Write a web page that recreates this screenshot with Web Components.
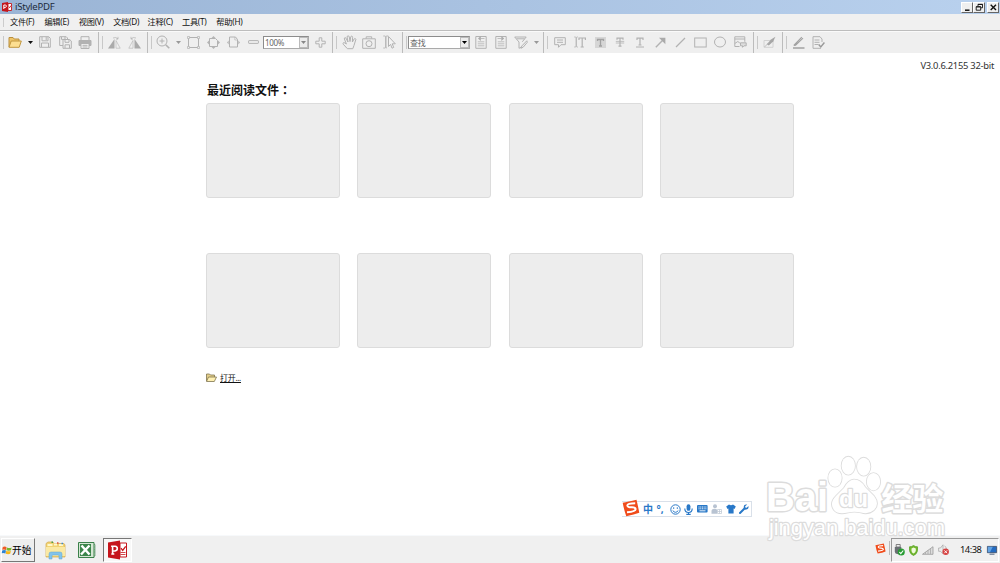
<!DOCTYPE html>
<html lang="zh-CN">
<head>
<meta charset="utf-8">
<title>iStylePDF</title>
<style>
html, body { margin: 0; height: 100%; overflow: hidden; }
body { font-family: "Noto Sans", "Noto Sans CJK SC", sans-serif; background: #fff; color: #222; }
</style>
</head>
<body>
<pdf-app></pdf-app>

<script>
// --- Icons: [width, height, svg content] ---
const ICONS = {
    app: [10, 10, '<path d="M0 1L6 0v10L0 9z" fill="#c4161c"/><path d="M6 1.5h3.5v7H6z" fill="#fff" stroke="#c4161c" stroke-width=".9"/><path d="M1.8 7V3h1.5q1.2.1 1.1 1.2T3.2 5.4H2M6.8 5.8l.8.9 1.3-2" stroke="#fff" fill="none"/><path d="M6.8 4.8l.8.9 1.2-2" stroke="#c4161c" fill="none"/>'],
    open: [14, 12, '<path d="M1 11V1.500h4L6.300 3H11v3" fill="#efc568" stroke="#b98f3e"/><path d="M1 11.300L3.200 5H13.300L11.200 11.300z" fill="#fddf91" stroke="#c0963f"/>'],
    openSmall: [11, 9, '<path d="M.5 8V1h3l1 1h4v2" fill="#e5cf8a" stroke="#7e744f" stroke-width=".8"/><path d="M.5 8.5L2.5 4h8L8.3 8.5z" fill="#fff0b2" stroke="#7e744f" stroke-width=".8"/>'],
    save: [12, 12, '<path d="M.7.7h9L11.3 2.3v9H.7z"/><path d="M3 .8v4h6v-4M7.2 1v3M2.5 11V7h7v4"/>'],
    saveAll: [13, 13, '<path d="M4 9.5H.7V.7h6.500L8.500 2v1.300"/><path d="M2.5.9v2.500h3.500v-2.500"/><path d="M4 3.500h6.500L12.300 5v7.300H4z"/><path d="M6 3.700v2.600h4v-2.600M6 12V8.800h4.500V12"/>'],
    print: [14, 13, '<path d="M3 4V.7h8V4"/><path d="M1 4.5h12v5H1z" fill="#b2b2b2"/><path d="M3 7.5h8v5H3z" fill="#f4f4f4"/><path d="M4.5 9.3h5M4.5 11h5"/>'],
    mirrorL: [13, 13, '<path d="M0 12.5L6.500 3v9.500z" fill="#aaa" stroke="none"/><path d="M8 4.500l4.200 7.700H8z" stroke-width=".6"/><path d="M5 2q3-1.4 5 .8M10 .8v2.300H8" stroke-width=".7"/>'],
    mirrorR: [13, 13, '<path d="M13 12.5L6.500 3v9.500z" fill="#aaa" stroke="none"/><path d="M5 4.500L.8 12.200H5z" stroke-width=".6"/><path d="M8 2Q5 .6 3 2.800M3 .8v2.300h2" stroke-width=".7"/>'],
    zoom: [14, 14, '<circle cx="6" cy="6" r="5"/><path d="M3.5 6h5M6 3.5v5"/><path d="M9.7 9.7L13.3 13.3" stroke-width="1.600"/>'],
    actual: [13, 13, '<path d="M2.500 1.500h8M2.500 11.500h8M1.500 2.500v8M11.500 2.500v8"/><path d="M.5.5h2v2h-2zM10.500.5h2v2h-2zM.5 10.500h2v2h-2zM10.500 10.500h2v2h-2z" stroke-width=".7"/>'],
    fitPage: [13, 13, '<path d="M2.500 2.500h6L10.500 4.500v6H2.500z"/><g fill="#b5b5b5" stroke="none"><path d="M6.500 0l2 2h-4zM6.500 13l2-2h-4zM0 6.500l2-2v4zM13 6.500l-2-2v4z"/></g>'],
    fitWidth: [13, 12, '<path d="M2.500 1h6L10.500 3.500V11h-8z"/><path d="M7.800 1v3h2.700" stroke-width=".6"/><g fill="#b5b5b5" stroke="none"><path d="M0 6.500l1.700-2v4zM13 6.500l-1.700-2v4z"/></g>'],
    minus: [11, 4, '<rect x=".6" y=".6" width="9.800" height="2.800" rx=".5"/>'],
    plus: [11, 11, '<path d="M4.200.8h2.600v3.400h3.400v2.600H6.800v3.400H4.200V6.800H.8V4.200h3.400z"/>'],
    hand: [15, 15, '<path d="M5.4 13.7L1.2 9.2Q.5 8 1.6 7.7T4.4 9L2.4 4Q2.1 2.7 3 2.6T4.3 3.8L6 7 5.1 2Q5.2.8 6.1.8T7.3 2L8 6.6 8.7 2Q9 1 9.800 1.100T10.600 2.500L10.400 7l1.700-3Q12.800 3.100 13.500 3.700T13.700 5L12 10.400 10.800 13.700z"/>'],
    camera: [14, 13, '<path d="M.7 2.8h12.6v9.500H.7zM4.2 2.600V.8h5.500v1.800"/><circle cx="7" cy="7.700" r="3"/>'],
    select: [13, 14, '<path d="M.3 1h1.500Q2.800 1.200 2.800 2v10q0 .9-1 1H.3M5.300 1h-1.500Q2.800 1.200 2.800 2v10q0 .9 1 1" stroke-width=".9"/><path d="M5.500 1.500v10L7.600 9.300 9 13.200 10.700 12.400 9.200 8.800H12.300z" fill="#f3f3f3"/>'],
    findPrev: [12, 14, '<path d="M.8 1.500h10.400v11.800H.8z"/><path d="M5.500 3.500h4M2.800 6.800h6.500M2.800 8.800h6.500M2.800 10.800h6.500" stroke-width=".8"/><path d="M5.800 1L3 3.500 5.800 6z" fill="#aaa" stroke="none"/>'],
    findNext: [12, 14, '<path d="M.8 1.500h10.400v11.800H.8z"/><path d="M2.500 3.500h4M2.800 6.800h6.500M2.800 8.800h6.500M2.800 10.800h6.500" stroke-width=".8"/><path d="M6.300 1L9.200 3.500 6.300 6z" fill="#aaa" stroke="none"/>'],
    filter: [14, 13, '<path d="M.7 1h11.500L8.300 5.800M.7 1L5 6v6.300l2.500-1.400"/><path d="M2.5 2.800h8M12.800 4.800L7.900 9.900 6.900 12.300 9.200 11.200 13.300 6.300z"/>'],
    note: [12, 11, '<path d="M.7.7h10.600v7H7L4.500 10.300V7.700H.7z"/><path d="M3 3h6M3 5.300h6"/>'],
    insertText: [12, 12, '<path d="M.2 1h1q1 .1 1 1v8q0 1-1 1h-1M4 1h-.7q-1 .1-1 1v8q0 1 1 1H4" stroke-width=".8"/><path d="M5 4V2h6.400v2M8.200 2v9M6.600 11h3.200" stroke-width="1.200"/>'],
    highlight: [11, 11, '<path d="M0 0h11v11H0z" fill="#d6d6d6" stroke="none"/><path d="M2.500 4V2.500h6V4M5.500 2.500V9M4 9h3" stroke="#a2a2a2" stroke-width="1.300"/>'],
    strike: [10, 10, '<path d="M2 2.800V1.200h6v1.600M5 1.200V9M3.500 9.200h3" stroke-width="1.200"/><path d="M.8 4.400h8.400M.8 6h8.400" stroke-width=".8"/>'],
    underline: [10, 11, '<path d="M2 3V1.200h6V3M5 1.200V7.800M3.500 8h3" stroke-width="1.200"/><path d="M1 10h8"/>'],
    arrow: [11, 11, '<path d="M.8 10.200L8 3" stroke-width="1.400"/><path d="M4 .8h6.400v6.400z" fill="#aaa" stroke="none"/>'],
    line: [11, 11, '<path d="M1 10L10 1" stroke-width="1.200"/>'],
    rect: [13, 11, '<rect x=".7" y="1" width="11.500" height="9"/>'],
    ellipse: [12, 12, '<ellipse cx="6" cy="6" rx="5.500" ry="5"/>'],
    stamp: [13, 12, '<path d="M5.500 10.500H.8V.8h10v5M.8 3h10M.8 7.500l3-2 2 1.500"/><path d="M6.500 6.800h5.700v3H10l-1.500 1.500V9.800h-2z" fill="#ddd"/>'],
    sign: [13, 13, '<path d="M1 4.500h9v6.800H1z" stroke="#d2d2d2"/><path d="M3.800 8.300L8 3.500 12.400.8 10.400 5.200 5.800 9.500z" fill="#a6a6a6" stroke="none"/><path d="M1.500 11l4-4" stroke-width=".8"/>'],
    edit: [13, 13, '<path d="M1.800 9.500L9.800 1.200M1.800 9.500l1.800-.3L11 2.200" stroke="#a2a2a2" stroke-width="1.100"/><path d="M1 12h11.500" stroke="#a2a2a2" stroke-width="1.500"/>'],
    form: [13, 13, '<path d="M9 12.300H1V.7h7L10 3v3"/><path d="M2.500 4h5M2.500 6.300h5M2.500 8.500h4"/><path d="M6.700 8.500L8.800 11l3.600-4.500" stroke="#999" stroke-width="1.400"/>'],
    flag: [10, 9, '<path d="M.8 1Q3 0 4.6 1.2L4 4Q2.2 3 .2 3.8z" fill="#ef5b25"/><path d="M5 1.4q2 1 4.6 0L9 4.3Q7 5.2 4.4 4.3z" fill="#79b82c"/><path d="M.2 4.4q2-1 3.8 0L3.4 7.5Q2 6.6-.3 7.2z" fill="#2c83d2"/><path d="M4.3 4.8q2.5 1 4.6 0L8.2 7.8Q6 8.6 3.7 7.7z" fill="#f7b719"/>'],
    explorer: [21, 20, '<path d="M1 17V3.5L3 2h5l1 1.5h10L20 5v12z" fill="#f1d374" stroke="#d3a94c" stroke-width=".7"/><path d="M2.5 5h5M9 4.5h3M14 5h4" stroke="#fff8ca" stroke-width="2"/><path d="M6.500 2.200h1.500" stroke="#48a04b" stroke-width="1.500"/><path d="M12 3h1.500" stroke="#e0503a" stroke-width="1.500"/><path d="M16.500 3.500h1.500" stroke="#3b86cc" stroke-width="1.500"/><path d="M1 7h19v9H1z" fill="#fae9a4"/><path d="M4 19v-5q0-2 2-2h9q2 0 2 2v5h-3v-3q0-1-1-1H8q-1 0-1 1v3z" fill="#83c3ea" stroke="#5fa5d2" stroke-width=".5"/>'],
    excel: [19, 18, '<path d="M11 3.500h7V15h-7z" fill="#eef6ee" stroke="#6da17a" stroke-width=".8"/><path d="M13 6h5M13 8.500h5M13 11h5M15.500 4v11" stroke="#8ab795" stroke-width=".8"/><path d="M1.500 1.500h15.500v15H1.500z" fill="#d5e6d4" stroke="#3a8049"/><path d="M3 3h11v12H3z" fill="#3b854a"/><path d="M4.500 4.500l8 9M12.500 4.500l-8.500 9" stroke="#fff" stroke-width="2.400"/>'],
    pdf: [20, 20, '<path d="M0 2.5L12 .5v19L0 17.5z" fill="#c6151c"/><path d="M12 3h6.500v14H12z" fill="#fff" stroke="#c6151c"/><path d="M4.6 14V6M3.1 6.300h4q2.200.2 2.200 2.200T7 11H5M3.300 14h3" stroke="#fff" stroke-width="1.600" fill="none"/><path d="M13 8.200l1.700 2.200 3-4" stroke="#c6151c" stroke-width="1.300" fill="none"/><path d="M12.500 12.500h5M12.500 14.500h5" stroke="#c6151c" stroke-width=".8"/>'],
    sogou: [18, 18, '<path d="M.7 3.700Q6 3 14.500.8q1 4 2.800 13-5 2-13 3.400Q2 11 .7 3.700z" fill="#f04c1b"/><path d="M13.200 4.300Q5 4.300 5.400 6.700 6 8.500 10 8.300q3.500 0 3.600 1.800.2 2.300-8.600 3.200" stroke="#fff" stroke-width="2" fill="none"/>'],
    smile: [11, 11, '<circle cx="5.5" cy="5.5" r="4.7" stroke="#2878c8" fill="none"/><path d="M3.7 3.3v1.6M7.3 3.3v1.6M2.7 6.5q2.8 3.6 5.6 0" stroke="#2878c8" fill="none"/>'],
    mic: [9, 11, '<rect x="2.6" y=".3" width="3.8" height="6.5" rx="1.9" fill="#2878c8"/><path d="M.8 4.5q0 4 3.7 4t3.7-4M4.5 8v2.3M2.3 10.400h4.400" stroke="#2878c8" stroke-width="1.100" fill="none"/>'],
    keyboard: [11, 8, '<rect width="10.600" height="7.600" rx="1" fill="#2878c8"/><path d="M1.5 2h8M1.5 3.800h8" stroke="#fff" stroke-width=".9" stroke-dasharray="1.1 .6"/><path d="M2.5 5.800h6" stroke="#fff" stroke-width=".9"/>'],
    user: [11, 10, '<circle cx="4" cy="2.2" r="2" fill="#b8c3d2"/><path d="M.5 9.8V7q0-2.3 3.5-2.3L6 5.4v4.400z" fill="#b8c3d2"/><path d="M6.5 5.5h4v4h-4zM8.500 5.500v4M6.500 7.500h4" fill="#fff" stroke="#bcc5d2" stroke-width=".7"/>'],
    shirt: [10, 10, '<path d="M3 .5q2 1.300 4 0L9.800 2.500 8.500 5 7.600 4.600v5H2.400v-5L1.500 5 .2 2.500z" fill="#2878c8"/>'],
    wrench: [10, 10, '<path d="M1 9L5.5 4.5" stroke="#2878c8" stroke-width="2" stroke-linecap="round"/><path d="M8.200.6Q5-.2 4.700 2.800 4.700 6 7.300 5.600 9.900 5.200 9.500 2L7.700 3.800 6.200 3.500 6.200 2.300z" fill="#2878c8"/>'],
    usb: [11, 12, '<path d="M2.2.5h4V3h-4z" fill="#eee" stroke="#666" stroke-width=".8"/><path d="M.8 3h6.500v5q0 2-2 2.300L3 10Q.8 9.500.8 7.500z" fill="#696f73"/><circle cx="7.300" cy="8" r="3.500" fill="#279c34"/><path d="M5.400 8l1.400 1.600L9.300 6.500" stroke="#fff" stroke-width="1.100" fill="none"/>'],
    shield: [9, 11, '<path d="M4.5.5Q6.5 2 8.5 1.8V5.5Q8 9 4.5 10.500 1 9 .5 5.500V1.800Q2.500 2 4.500.5z" fill="#73b72d" stroke="#58a32a" stroke-width=".8"/><path d="M4.500 2.400l2.300 1V6Q6.200 7.700 4.500 8.500 2.800 7.700 2.500 6V3.400z" fill="#effadd"/>'],
    signal: [12, 9, '<path d="M.5 8.300L11 .7v7.600z" fill="#ddd" stroke="#999" stroke-width=".8"/><path d="M3.500 6v2M6 4v4M8.500 2.400V8" stroke="#aaa" stroke-width=".8"/>'],
    muted: [12, 12, '<path d="M.6 4H2.500L5 .8v9L2.500 7.300H.6z" fill="#eee" stroke="#aaa" stroke-width=".8"/><path d="M6.500 2q2 1 2 3" stroke="#aaa" stroke-width=".8" fill="none"/><circle cx="7.700" cy="7.800" r="3.200" fill="#d64242"/><path d="M6.300 6.400l2.800 2.800M9.100 6.400L6.300 9.200" stroke="#fff"/>'],
    display: [10, 9, '<path d="M.4.4h9.200v6.300H.4z" fill="#246bc0" stroke="#333f55" stroke-width=".7"/><path d="M.8.8h5L3 6.200H.8z" fill="#63a3e3"/><path d="M2.5 8.200h5" stroke="#536682"/>'],
    min: [9, 9, '<path d="M2 7.200h4.500" stroke="#111" stroke-width="1.500"/>'],
    restore: [9, 9, '<path d="M3 3V1.300h4.500v3.500H6M3 1.500h4.500M1.200 3.700h4.500v3.500H1.200zM1.200 3.900h4.500" stroke="#111" stroke-width=".9" fill="none"/>'],
    close: [9, 9, '<path d="M1.700 1.800L7 7M7 1.800L1.700 7" stroke="#111" stroke-width="1.400"/>'],
};

class UiIcon extends HTMLElement {
    connectedCallback() {
        const [w, h, body] = ICONS[this.getAttribute('name')];
        const size = this.getAttribute('size') || w;
        this.attachShadow({mode: 'open'}).innerHTML = `
<style>:host{display:inline-flex;flex:none;align-items:center;justify-content:center}svg{display:block;overflow:visible}</style>
<svg width="${size}" height="${h * size / w}" viewBox="0 0 ${w} ${h}">${body}</svg>`;
    }
}
customElements.define('ui-icon', UiIcon);

// --- Toolbar button; "drop" draws only the small drop-down triangle ---
class ToolButton extends HTMLElement {
    connectedCallback() {
        const name = this.getAttribute('name');
        const [w, h, body] = ICONS[name] || [5, 3, '<path d="M0 0h5L2.5 3z" fill="currentColor" stroke="none"/>'];
        this.attachShadow({mode: 'open'}).innerHTML = `
<style>
:host{display:flex;flex:none;width:20px;align-items:center;justify-content:center;color:#999}
:host([name=drop]){width:10px}
:host([active]){color:#111}
svg{display:block;fill:none;stroke:#b2b2b2;stroke-width:1}
</style>
<svg width="${w}" height="${h}" viewBox="0 0 ${w} ${h}">${body}</svg>`;
    }
}
customElements.define('tool-button', ToolButton);

class ToolGroup extends HTMLElement {
    constructor() {
        super();
        this.attachShadow({mode: 'open'}).innerHTML = `
<style>
:host{display:flex;flex:none;box-sizing:border-box;align-items:center;padding-bottom:1px;border-right:1px solid #bcbcbc}
:host(:last-of-type){border:0}
i{flex:none;width:1px;height:13px;margin:0 1px 0 3px;background:#c8c8c8}
</style><i></i><slot></slot>`;
    }
}
customElements.define('tool-group', ToolGroup);

class ComboBox extends HTMLElement {
    constructor() {
        super();
        this.attachShadow({mode: 'open'}).innerHTML = `
<style>
:host{display:flex;flex:none;box-sizing:border-box;height:13px;border:1px solid;border-color:#8c8c8c #aaa #aaa #8c8c8c;background:#fff;font-size:8px;line-height:11px;color:#666}
span{flex:1;padding-left:1px;letter-spacing:-.3px;white-space:nowrap}
b{display:flex;width:9px;align-items:center;justify-content:center;background:#ececec;border:1px solid #bbb;box-sizing:border-box;color:#888}
:host([active]) b{color:#000}
</style>
<span><slot></slot></span><b><svg width="5" height="3"><path d="M0 0h5L2.5 3z" fill="currentColor"/></svg></b>`;
    }
}
customElements.define('combo-box', ComboBox);

class TitleBar extends HTMLElement {
    constructor() {
        super();
        this.attachShadow({mode: 'open'}).innerHTML = `
<style>
:host{display:flex;height:14px;box-sizing:border-box;padding:0 1px 0 2px;align-items:center;background:linear-gradient(90deg,#9ab4d5,#b9d1ee);color:#1d2b3c}
h1{flex:1;margin:0 0 0 3px;font-size:9.6px;letter-spacing:-.25px;font-weight:400;line-height:14px;white-space:nowrap}
button{display:flex;width:12px;height:11px;padding:0;align-items:center;justify-content:center;border:1px solid;border-color:#fff #666 #666 #fff;background:#efefef}
button:last-child{margin-left:2px}
</style>
<ui-icon name="app"></ui-icon><h1><slot></slot></h1>
<button><ui-icon name="min"></ui-icon></button><button><ui-icon name="restore"></ui-icon></button><button><ui-icon name="close"></ui-icon></button>`;
    }
}
customElements.define('title-bar', TitleBar);

class MenuBar extends HTMLElement {
    constructor() {
        super();
        const items = ['文件(F)', '编辑(E)', '视图(V)', '文档(D)', '注释(C)', '工具(T)', '帮助(H)'];
        this.attachShadow({mode: 'open'}).innerHTML = `
<style>
:host{display:flex;height:17px;box-sizing:border-box;align-items:center;background:#f0f0f0;border-bottom:1px solid #bdbdbd;font-size:8.2px;letter-spacing:-.25px;color:#111}
i{width:1px;height:9px;margin:0 6px 0 3px;background:#ccc}
span{width:34.4px;line-height:16px;white-space:nowrap}
</style><i></i>${items.map(t => `<span>${t}</span>`).join('')}`;
    }
}
customElements.define('menu-bar', MenuBar);

class ToolBar extends HTMLElement {
    constructor() {
        super();
        const tools = names => names.split(' ').map(n => `<tool-button name="${n}"></tool-button>`).join('');
        this.attachShadow({mode: 'open'}).innerHTML = `
<style>
:host{display:flex;height:22px;background:#efefef;border-top:1px solid #fafafa;box-sizing:border-box}
.zoom{width:46px;margin-right:1px}
.find{width:62px;margin-right:1px}
.wide{margin-left:1px}
</style>
<tool-group style="width:99px"><tool-button name="open"></tool-button><tool-button name="drop" active></tool-button>${tools('save saveAll print')}</tool-group>
<tool-group style="width:49px">${tools('mirrorL mirrorR')}</tool-group>
<tool-group style="width:185px">${tools('zoom drop actual fitPage fitWidth minus')}<combo-box class="zoom">100%</combo-box>${tools('plus')}</tool-group>
<tool-group style="width:70px"><tool-button class="wide" name="hand"></tool-button>${tools('camera select')}</tool-group>
<tool-group style="width:141px"><combo-box class="find" active>查找</combo-box>${tools('findPrev findNext filter drop')}</tool-group>
<tool-group style="width:210px"><tool-button class="wide" name="note"></tool-button>${tools('insertText highlight strike underline arrow line rect ellipse stamp')}</tool-group>
<tool-group style="width:29px">${tools('sign')}</tool-group>
<tool-group>${tools('edit form')}</tool-group>`;
    }
}
customElements.define('tool-bar', ToolBar);

class StartPage extends HTMLElement {
    constructor() {
        super();
        this.attachShadow({mode: 'open'}).innerHTML = `
<style>
:host{display:block;flex:1;background:#fff}
.version{padding:6px 6px 0 0;text-align:right;font-size:9.4px;letter-spacing:-.27px;line-height:14px;color:#333}
main{width:588px;margin-left:206px}
h2{margin:9px 0 4px;padding-left:1px;font-size:12px;line-height:16px;font-weight:600;color:#111}
h2 span{font-family:"Noto Sans CJK TC",sans-serif}
.files{display:grid;grid-template-columns:repeat(4,134px);grid-auto-rows:95px;gap:55px 17.3px}
.files div{box-sizing:border-box;border:1px solid #dcdcdc;border-radius:3px;background:#ededed}
.open{display:flex;align-items:center;margin-top:23px;gap:3px;font-size:8px;line-height:13px;color:#111}
u{letter-spacing:-.3px;text-underline-offset:1px}
</style>
<div class="version">V3.0.6.2155 32-bit</div>
<main>
    <h2>最近阅读文件<span lang="zh-TW">：</span></h2>
    <div class="files">${'<div></div>'.repeat(8)}</div>
    <div class="open"><ui-icon name="openSmall"></ui-icon><u>打开...</u></div>
</main>`;
    }
}
customElements.define('start-page', StartPage);

class ImeBar extends HTMLElement {
    constructor() {
        super();
        this.attachShadow({mode: 'open'}).innerHTML = `
<style>
:host{position:absolute;left:622px;top:501px;display:flex;width:130px;height:16px;box-sizing:border-box;align-items:center;background:#fff;border:1px solid #d9e0e9;border-left:0;color:#2878c8;font-size:10px;font-weight:700;line-height:14px}
div{flex:1;display:flex;align-items:center;justify-content:space-between;padding:0 2px 0 3px}
ui-icon:first-of-type{margin-top:-2px}
span{width:10px;white-space:nowrap}
</style>
<ui-icon name="sogou"></ui-icon>
<div><span>中</span><span>°,</span>${['smile', 'mic', 'keyboard', 'user', 'shirt', 'wrench'].map(n => `<ui-icon style="margin:0" name="${n}"></ui-icon>`).join('')}</div>`;
    }
}
customElements.define('ime-bar', ImeBar);

class TaskBar extends HTMLElement {
    constructor() {
        super();
        this.attachShadow({mode: 'open'}).innerHTML = `
<style>
:host{display:flex;height:28px;box-sizing:border-box;padding:2px 1px 1px;background:#f0f0f0;border-top:1px solid #f7f9fb;color:#111}
.start{display:flex;width:34px;box-sizing:border-box;align-items:center;gap:0;padding:0;border:1px solid;border-color:#fff #777 #777 #fff;background:#eee;font:9.7px "Noto Sans","Noto Sans CJK SC",sans-serif;white-space:nowrap}
.task{display:flex;width:29px;margin-left:2px;box-sizing:border-box;align-items:center;justify-content:center}
.first{margin-left:6px}
.task.on{border:1px solid;border-color:#777 #fff #fff #777;background:#f8f8f8}
.sogou{margin:0 3px 3px auto}
.tray{display:flex;width:108px;box-sizing:border-box;align-items:center;border:1px solid;border-color:#999 #fff #fff #999;padding-left:2px}
.tray ui-icon{margin-right:4px}
.bar{width:1px;height:14px;margin:3px 1px 0 0;background:#bbb}
time{width:22px;margin:0 5px 0 6px;font-size:9.4px;letter-spacing:-.5px;line-height:22px;white-space:nowrap}
.tray ui-icon:last-child{margin:0}
</style>
<button class="start"><ui-icon name="flag"></ui-icon>开始</button>
<div class="task first"><ui-icon name="explorer"></ui-icon></div>
<div class="task"><ui-icon name="excel"></ui-icon></div>
<div class="task on"><ui-icon name="pdf"></ui-icon></div>
<ui-icon class="sogou" name="sogou" size="11"></ui-icon><div class="bar"></div>
<div class="tray"><ui-icon name="usb"></ui-icon><ui-icon name="shield"></ui-icon><ui-icon name="signal"></ui-icon><ui-icon name="muted"></ui-icon><time>14:38</time><ui-icon name="display"></ui-icon></div>`;
    }
}
customElements.define('task-bar', TaskBar);

// --- Outlined logo lying over the page and the taskbar ---
class WaterMark extends HTMLElement {
    constructor() {
        super();
        this.attachShadow({mode: 'open'}).innerHTML = `
<style>
:host{position:absolute;left:760px;top:450px;pointer-events:none}
svg{display:block;fill:#fff;stroke:#dcdcdc;stroke-width:3;stroke-linejoin:round;paint-order:stroke;font-family:"Liberation Sans","Noto Sans CJK SC",sans-serif}
ellipse,path{stroke-width:1.7}
</style>
<svg width="200" height="96">
<text x="6" y="61" font-size="40" font-weight="700" textLength="62" lengthAdjust="spacingAndGlyphs">Bai</text>
<ellipse cx="75" cy="28" rx="6.700" ry="8.700"/><ellipse cx="88.300" cy="15.700" rx="6.700" ry="9"/><ellipse cx="103.700" cy="16.700" rx="6.700" ry="9"/><ellipse cx="113.500" cy="31.700" rx="6.700" ry="8.700"/>
<path d="M94 29.500Q101 29.500 105 37L114 46Q120 54 114 60 108 65 101 62.500 94 61 88 62.500 78 65 74 60 69 53 76 46L84 38Q88 30 94 29.500z"/>
<text x="79" y="57" font-size="23" font-weight="700" textLength="29" lengthAdjust="spacingAndGlyphs" stroke-width="2.400">du</text>
<text x="121.500" y="60" font-size="31" font-weight="700" textLength="62">经验</text>
<text x="9" y="85" font-size="22" textLength="176" stroke-width="2.400">jingyan.baidu.com</text>
</svg>`;
    }
}
customElements.define('water-mark', WaterMark);

class PdfApp extends HTMLElement {
    constructor() {
        super();
        this.attachShadow({mode: 'open'}).innerHTML = `
<style>:host{position:relative;display:flex;flex-direction:column;width:1000px;height:563px;overflow:hidden}</style>
<title-bar>iStylePDF</title-bar>
<menu-bar></menu-bar>
<tool-bar></tool-bar>
<start-page></start-page>
<task-bar></task-bar>
<ime-bar></ime-bar>
<water-mark></water-mark>`;
    }
}
customElements.define('pdf-app', PdfApp);
</script>
</body>
</html>
